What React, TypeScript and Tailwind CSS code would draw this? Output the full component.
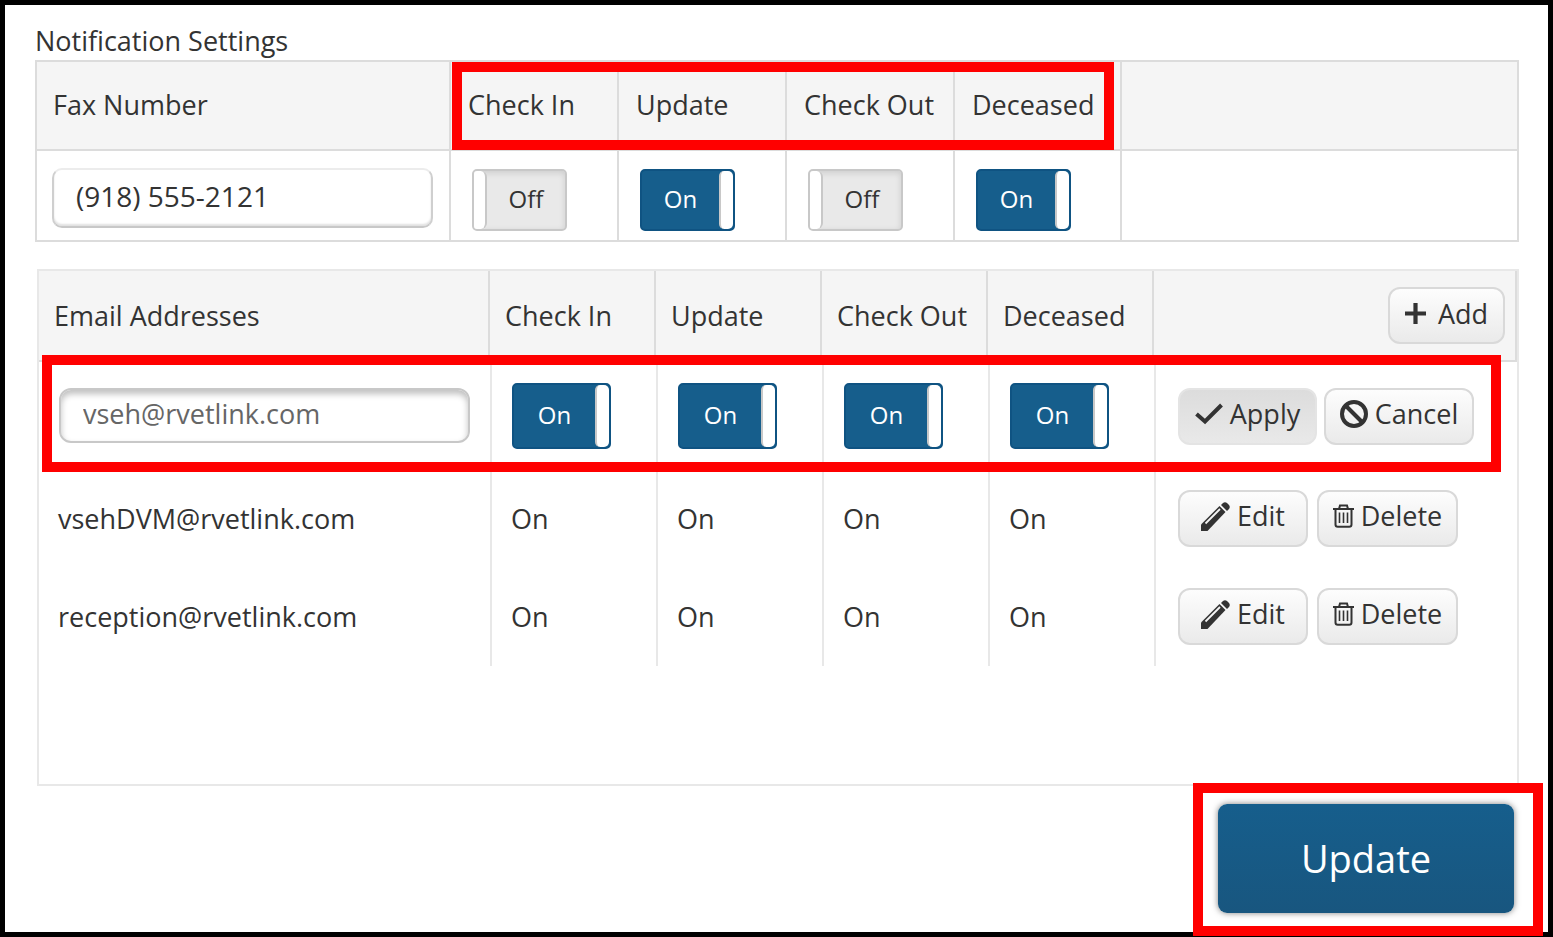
import React, { useState } from 'react';

const EVENTS = ['Check In', 'Update', 'Check Out', 'Deceased'];

const SAVED_EMAILS = ['vsehDVM@rvetlink.com', 'reception@rvetlink.com'];

interface ToggleProps {
  label: string;
  initial: boolean;
  large?: boolean;
}

const Toggle: React.FC<ToggleProps> = ({ label, initial, large }) => {
  const [on, setOn] = useState(initial);
  const size = large ? 'h-[66px] w-[99px]' : 'h-[62px] w-[95px]';
  const tone = on
    ? 'border-[#0f5382] bg-[#165e8c] font-medium text-white'
    : 'border-[#c8c8c8] bg-[#e9e9e9] text-[#333] shadow-[inset_0_2px_6px_rgba(0,0,0,0.12)]';

  return (
    <button
      type="button"
      role="switch"
      aria-checked={on}
      aria-label={label}
      onClick={() => setOn(!on)}
      className={`flex items-stretch overflow-hidden rounded-[5px] border-2 text-2xl ${size} ${tone}`}
    >
      {!on && <span className="w-[13px] rounded-r-md border-r-2 border-[#c8c8c8] bg-white" />}
      <span className="flex flex-1 items-center justify-center pb-[2px]">{on ? 'On' : 'Off'}</span>
      {on && <span className="w-[14px] rounded-[5px] border-l-2 border-[#c8c8c8] bg-white" />}
    </button>
  );
};

interface ActionButtonProps {
  icon: React.ReactNode;
  children: React.ReactNode;
  className: string;
  pressed?: boolean;
}

const ActionButton: React.FC<ActionButtonProps> = ({ icon, children, className, pressed }) => (
  <button
    type="button"
    className={`flex h-[57px] items-center justify-center rounded-xl border-2 pb-1 ${className} ${
      pressed
        ? 'border-[#e4e4e4] bg-linear-to-b from-[#dcdcdc] to-[#e9e9e9]'
        : 'border-[#d9d9d9] bg-linear-to-b from-[#fdfdfd] to-[#eaeaea]'
    }`}
  >
    {icon}
    {children}
  </button>
);

const PlusIcon = () => (
  <svg width="21" height="21" viewBox="0 0 21 21" aria-hidden="true">
    <path d="M10.5 0V21M0 10.5H21" stroke="#333" strokeWidth="4.200" />
  </svg>
);

const CheckIcon = () => (
  <svg width="28" height="22" viewBox="0 0 28 22" aria-hidden="true">
    <path d="M1.500 11L10 18.500L26.500 2" fill="none" stroke="#333" strokeWidth="4" />
  </svg>
);

const BanIcon = () => (
  <svg width="28" height="28" viewBox="0 0 28 28" fill="none" stroke="#333" strokeWidth="4" aria-hidden="true">
    <circle cx="14" cy="14" r="12" />
    <path d="M5.500 5.500L22.500 22.500" />
  </svg>
);

const PencilIcon = () => (
  <svg width="29" height="29" viewBox="0 0 29 29" aria-hidden="true">
    <path d="M0 29V22.500L18.500 4L24.500 10L6.500 29Z" fill="#333" />
    <path d="M20 3L22 1Q24 -0.500 26 1L28 3Q29.500 5 28 7L26 9Z" fill="#333" />
    <path d="M4.500 21.500L19 7" stroke="#f5f5f5" strokeWidth="1.800" />
  </svg>
);

const TrashIcon = () => (
  <svg width="21" height="24" viewBox="0 0 21 24" fill="none" stroke="#333" strokeWidth="2" aria-hidden="true">
    <path d="M0 5H21M6 5L7 1.500H14L15 5" />
    <path d="M2.500 5V20.500Q2.500 22.800 4.800 22.800H16.200Q18.500 22.800 18.500 20.500V5" />
    <path d="M6.500 8.500V19M10.500 8.500V19M14.500 8.500V19" strokeWidth="1.600" />
  </svg>
);

const FaxTable = () => {
  const [fax, setFax] = useState('(918) 555-2121');

  return (
    <div className="relative border-2 border-[#dcdcdc]">
      <table className="w-full table-fixed border-separate border-spacing-0 text-left">
        <colgroup>
          <col className="w-[414px]" />
          <col className="w-[168px]" />
          <col className="w-[168px]" />
          <col className="w-[168px]" />
          <col className="w-[167px]" />
          <col />
        </colgroup>
        <thead>
          <tr className="h-[89px] bg-[#f5f5f5]">
            <th className="border-r-2 border-b-2 border-[#dcdcdc] px-4 pb-[2px] font-normal">
              <label htmlFor="fax">Fax Number</label>
            </th>
            {EVENTS.map((event) => (
              <th key={event} className="border-r-2 border-b-2 border-[#dcdcdc] pl-[17px] pb-[2px] font-normal">
                {event}
              </th>
            ))}
            <td className="border-b-2 border-[#dcdcdc]" />
          </tr>
        </thead>
        <tbody>
          <tr className="h-[89px]">
            <td className="border-r-2 border-[#dcdcdc] pt-1 pr-4 pl-[15px]">
              <input
                id="fax"
                value={fax}
                onChange={(e) => setFax(e.target.value)}
                className="block h-[60px] w-full rounded-[10px] border-2 border-t-[#ececec] border-r-[#cfcfcf] border-b-[#c8c8c8] border-l-[#cfcfcf] px-[22px] pb-1 text-[28px] shadow-[inset_0_-2px_2px_rgba(0,0,0,0.12)] outline-none"
              />
            </td>
            {EVENTS.map((event, i) => (
              <td key={event} className="border-r-2 border-[#dcdcdc] pt-2 pl-[21px]">
                <Toggle label={`Fax ${event}`} initial={i % 2 === 1} />
              </td>
            ))}
            <td />
          </tr>
        </tbody>
      </table>
      {/* Callout around the event headings */}
      <div className="pointer-events-none absolute top-0 left-[415px] h-[88px] w-[662px] border-10 border-[#ff0000]" />
    </div>
  );
};

const EmailTable = () => {
  const [email, setEmail] = useState('vseh@rvetlink.com');

  return (
    <div className="relative ml-[2px] h-[517px] border-2 border-[#e8e8e8]">
      <table className="w-full table-fixed border-separate border-spacing-0 text-left">
        <colgroup>
          <col className="w-[451px]" />
          <col className="w-[166px]" />
          <col className="w-[166px]" />
          <col className="w-[166px]" />
          <col className="w-[166px]" />
          <col />
        </colgroup>
        <thead>
          <tr className="h-[91px] bg-[#f5f5f5]">
            <th className="border-r-2 border-b-2 border-[#dcdcdc] px-[15px] font-normal">Email Addresses</th>
            {EVENTS.map((event) => (
              <th key={event} className="border-r-2 border-b-2 border-[#dcdcdc] pl-[15px] font-normal">
                {event}
              </th>
            ))}
            <td className="border-r-2 border-b-2 border-[#dcdcdc] pr-[10px]">
              <div className="flex justify-end">
                <ActionButton icon={<PlusIcon />} className="w-[117px] gap-3">
                  Add
                </ActionButton>
              </div>
            </td>
          </tr>
        </thead>
      </table>
      <table className="w-full table-fixed border-separate border-spacing-0 text-left">
        <colgroup>
          <col className="w-[453px]" />
          <col className="w-[166px]" />
          <col className="w-[166px]" />
          <col className="w-[166px]" />
          <col className="w-[166px]" />
          <col />
        </colgroup>
        <tbody>
          <tr className="h-[108px]">
            <td className="border-r-2 border-[#e8e8e8] pr-5 pb-[2px] pl-5">
              <input
                aria-label="Email address"
                value={email}
                onChange={(e) => setEmail(e.target.value)}
                className="block h-[55px] w-full rounded-xl border-2 border-[#c8c8c8] px-[22px] pb-1 text-[#666] shadow-[inset_0_4px_6px_rgba(0,0,0,0.25)] outline-none"
              />
            </td>
            {EVENTS.map((event) => (
              <td key={event} className="border-r-2 border-[#e8e8e8] pl-5">
                <Toggle label={`Email ${event}`} initial large />
              </td>
            ))}
            <td className="pl-[22px]">
              <div className="flex gap-[7px]">
                <ActionButton icon={<CheckIcon />} className="w-[139px] gap-[7px]" pressed>
                  Apply
                </ActionButton>
                <ActionButton icon={<BanIcon />} className="w-[150px] gap-[7px]">
                  Cancel
                </ActionButton>
              </div>
            </td>
          </tr>
          {SAVED_EMAILS.map((address) => (
            <tr key={address} className="h-[98px]">
              <td className="border-r-2 border-[#e8e8e8] px-[19px]">{address}</td>
              {EVENTS.map((event) => (
                <td key={event} className="border-r-2 border-[#e8e8e8] pl-[19px]">
                  On
                </td>
              ))}
              <td className="pb-[2px] pl-[22px]">
                <div className="flex gap-[9px]">
                  <ActionButton icon={<PencilIcon />} className="w-[130px] gap-[7px]">
                    Edit
                  </ActionButton>
                  <ActionButton icon={<TrashIcon />} className="w-[141px] gap-[7px]">
                    Delete
                  </ActionButton>
                </div>
              </td>
            </tr>
          ))}
        </tbody>
      </table>
      {/* Callout around the row being edited */}
      <div className="pointer-events-none absolute top-[84px] right-4 left-[3px] h-[117px] border-10 border-[#ff0000]" />
    </div>
  );
};

export default function App() {
  return (
    <main className="min-h-screen border-5 border-black bg-white font-['Open_Sans',sans-serif] text-[27px] leading-9 text-[#333]">
      <div className="pt-[18px] pr-[29px] pl-[30px]">
        <h1 className="h-[37px]">Notification Settings</h1>
        <FaxTable />
        <div className="h-[27px]" />
        <EmailTable />
      </div>
      {/* The callout overlaps both the email table and the page frame */}
      <div className="relative z-10 -mt-[3px] -mb-1 flex justify-end pr-[5px]">
        <div className="h-[153px] w-[350px] border-10 border-[#ff0000] bg-white pt-[11px] pl-[15px]">
          <button
            type="button"
            className="block h-[109px] w-[296px] rounded-[9px] bg-linear-to-b from-[#165e8c] to-[#18567f] pb-[2px] text-[38px] font-medium text-white shadow-[0_0_6px_rgba(0,0,0,0.5)]"
          >
            Update
          </button>
        </div>
      </div>
    </main>
  );
}
